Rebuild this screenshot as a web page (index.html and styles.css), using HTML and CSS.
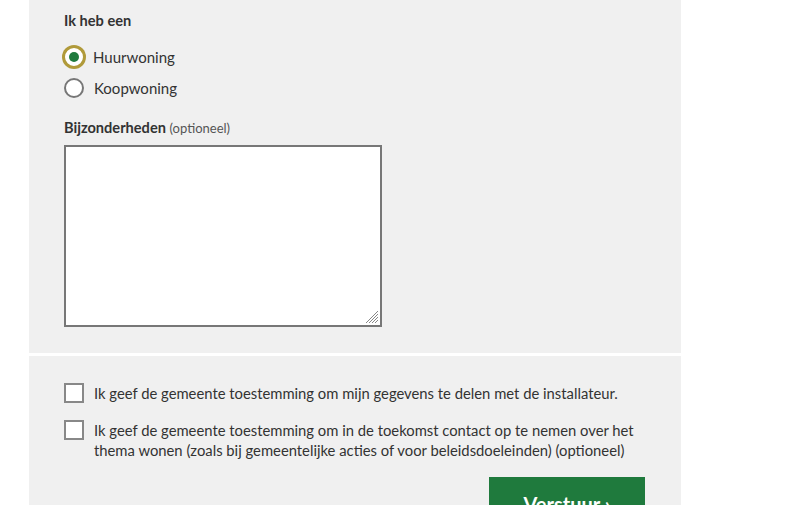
FILE: index.html
```html
<!DOCTYPE html>
<html lang="nl">
<head>
<meta charset="utf-8">
<link rel="stylesheet" href="styles.css">
</head>
<body>
<div class="page">
  <form class="form">
    <section class="panel panel-top">
      <fieldset class="group">
        <legend class="label">Ik heb een</legend>
        <label class="radio-row">
          <span class="radio checked"><span class="dot"></span></span>
          <span class="radio-text">Huurwoning</span>
        </label>
        <label class="radio-row">
          <span class="radio"></span>
          <span class="radio-text">Koopwoning</span>
        </label>
      </fieldset>
      <div class="field">
        <div class="label">Bijzonderheden <span class="opt">(optioneel)</span></div>
        <div class="textarea">
          <svg class="grip" width="14" height="14" viewBox="0 0 14 14">
            <path d="M13 1 L1 13 M13 4 L4 13 M13 7 L7 13 M13 10 L10 13" stroke="#888" stroke-width="1" fill="none"/>
          </svg>
        </div>
      </div>
    </section>
    <section class="panel panel-bottom">
      <label class="check-row">
        <span class="checkbox"></span>
        <span class="check-text">Ik geef de gemeente toestemming om mijn gegevens te delen met de installateur.</span>
      </label>
      <label class="check-row second">
        <span class="checkbox"></span>
        <span class="check-text">Ik geef de gemeente toestemming om in de toekomst contact op te nemen over het thema wonen (zoals bij gemeentelijke acties of voor beleidsdoeleinden) (optioneel)</span>
      </label>
      <div class="actions">
        <button type="button" class="submit">Verstuur ›</button>
      </div>
    </section>
  </form>
</div>
</body>
</html>
```
FILE: styles.css
```css
* { box-sizing: border-box; }
html, body { margin: 0; padding: 0; background: #fff; }
body {
  font-family: Lato, "Noto Sans", sans-serif;
  color: #333;
  font-size: 16px;
  overflow: hidden;
  height: 505px;
}
.page { padding-left: 29px; width: 681px; }
.form { display: flex; flex-direction: column; gap: 3px; }
.panel { background: #f0f0f0; padding-left: 35px; padding-right: 35px; }
.panel-top { padding-top: 11px; height: 353px; }
.group { border: 0; margin: 0; padding: 0; }
.label { font-weight: 700; font-size: 14.6px; line-height: 20px; color: #333; padding: 0; }
.group .label { margin-bottom: 10px; float: left; width: 100%; }
.radio-row { display: flex; align-items: center; gap: 10px; height: 31px; clear: both; }
.radio {
  width: 20px; height: 20px; border-radius: 50%;
  border: 2px solid #777; background: #fff;
  display: flex; align-items: center; justify-content: center;
}
.radio.checked { border: 2px solid #fff; box-shadow: 0 0 0 3px #b09a3a; width: 18px; height: 18px; margin: 0 1px; }
.dot { width: 10px; height: 10px; border-radius: 50%; background: #1f7a3d; }
.radio-row .radio.checked + .radio-text { margin-left: -1px; }
.radio-text { font-size: 15px; color: #333; }
.field { margin-top: 15px; }
.opt { font-weight: 400; font-size: 13px; color: #555; }
.textarea {
  margin-top: 7px;
  width: 318px; height: 182px;
  border: 2px solid #777; background: #fff;
  position: relative;
}
.grip { position: absolute; right: 1px; bottom: 1px; }
.panel-bottom { padding-top: 27px; height: 200px; }
.check-row { display: flex; align-items: flex-start; gap: 10px; }
.checkbox { flex: none; width: 20px; height: 20px; border: 2px solid #888; background: #fff; margin-top: 0; }
.check-text { font-size: 14.8px; line-height: 20px; color: #333; }
.second { margin-top: 17px; }
.actions { display: flex; justify-content: flex-end; padding-right: 1px; margin-top: 17px; }
.submit {
  width: 156px; height: 48px;
  background: #1f7a3d; color: #fff; border: 0;
  font-family: Lato, "Noto Sans", sans-serif;
  font-weight: 700; font-size: 20px;
  padding-top: 6px;
}
```
